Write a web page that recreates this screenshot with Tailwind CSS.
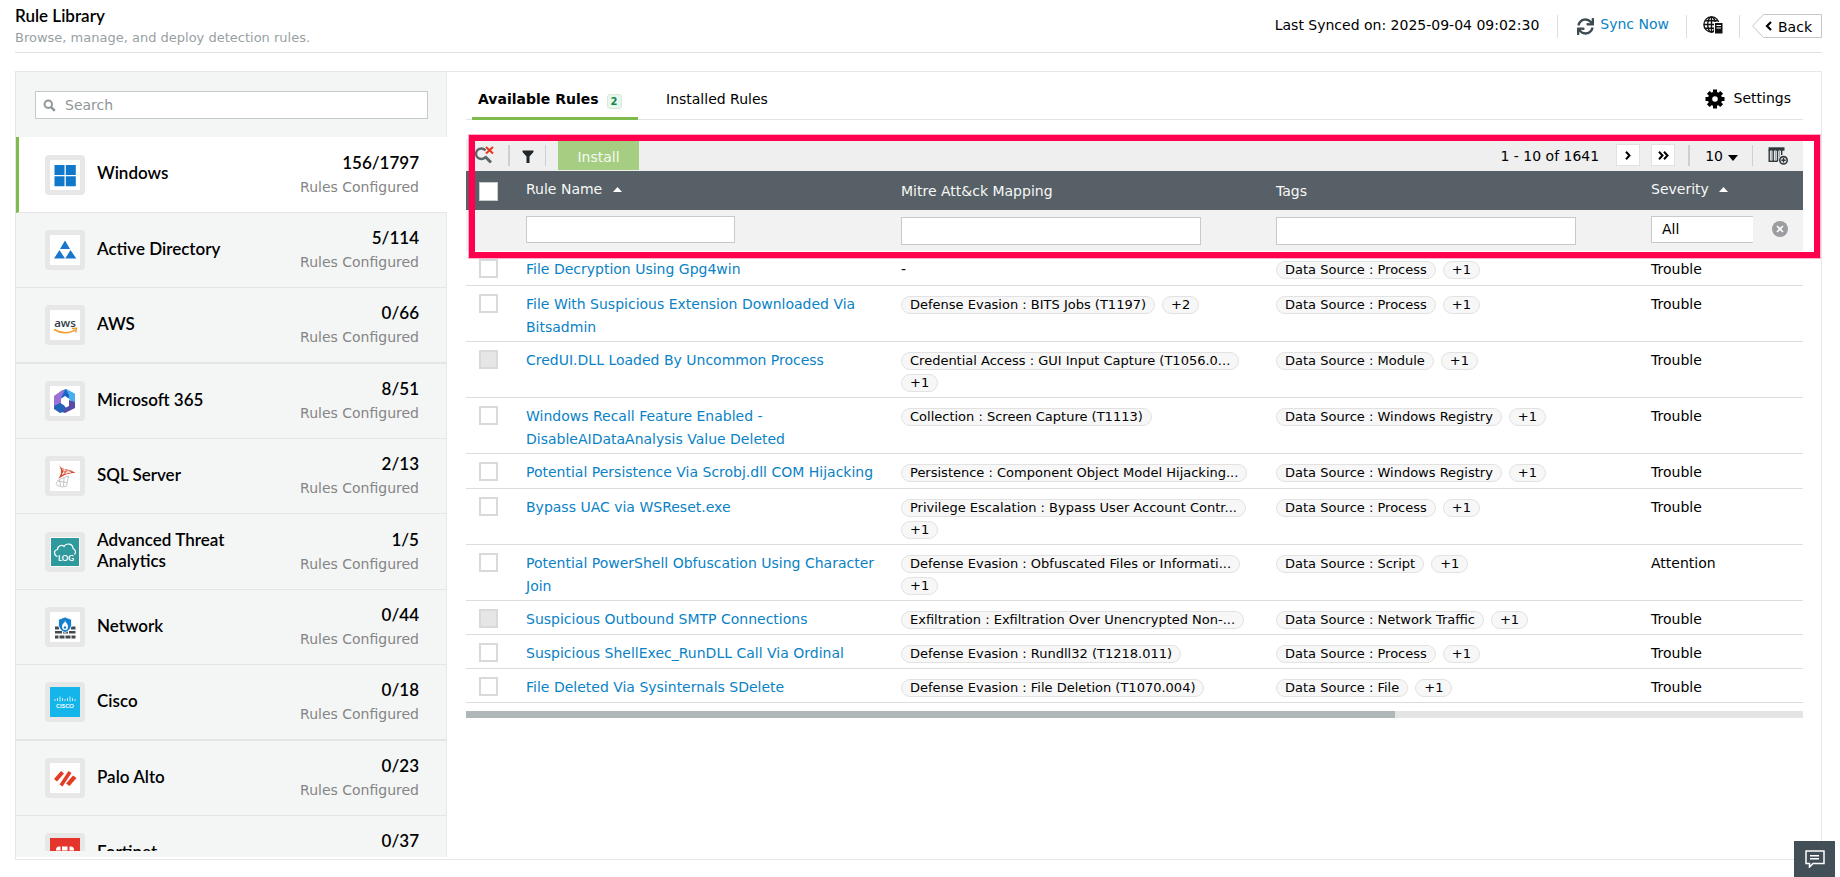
<!DOCTYPE html>
<html lang="en">
<head>
<meta charset="utf-8">
<title>Rule Library</title>
<script src="https://cdn.jsdelivr.net/npm/@tailwindcss/browser@4"></script>
</head>
<body class="min-h-screen bg-white font-['Verdana','DejaVu_Sans',sans-serif] text-[14px] text-black">
<svg class="hidden" aria-hidden="true">
  <symbol id="search" viewBox="0 0 16 16"><circle cx="6.5" cy="6.5" r="4.6" fill="none" stroke="currentColor" stroke-width="2.4"/><path d="M10 10l4.5 4.5" stroke="currentColor" stroke-width="3"/></symbol>
</svg>

<header class="mr-[18px] ml-[15px] flex h-[53px] items-start justify-between border-b border-[#e0e0e0]">
  <div class="pt-[5px]">
    <h1 class="font-['Lato',sans-serif] text-[17px] leading-[22px] font-semibold">Rule Library</h1>
    <p class="text-[13px] leading-[22px] text-[#979fa3]">Browse, manage, and deploy detection rules.</p>
  </div>
  <div class="flex items-center pt-[14px]">
    <span class="pr-[18px] pb-[3px] leading-[20px]">Last Synced on: 2025-09-04 09:02:30</span>
    <span class="h-[23px] w-px bg-[#ddd]"></span>
    <a href="#" class="flex items-center gap-[6px] pr-[17px] pb-[3px] pl-[19px] text-[#0a82c6]">
      <svg class="mt-[3px] size-[17px] text-[#3f4a50]" viewBox="0 0 512 512" fill="currentColor"><path d="M440.650 12.570l4 82.770A247.160 247.160 0 0 0 255.830 8C134.730 8 33.910 94.920 12.290 209.820A12 12 0 0 0 24.090 224h49.050a12 12 0 0 0 11.670-9.260 175.910 175.910 0 0 1 317-56.940l-101.460-4.860a12 12 0 0 0-12.570 12v47.410a12 12 0 0 0 12 12H500a12 12 0 0 0 12-12V12a12 12 0 0 0-12-12h-47.370a12 12 0 0 0-11.980 12.570zM255.830 432a175.610 175.610 0 0 1-146-77.800l101.800 4.870a12 12 0 0 0 12.570-12v-47.400a12 12 0 0 0-12-12H12a12 12 0 0 0-12 12V500a12 12 0 0 0 12 12h47.350a12 12 0 0 0 12-12.600l-4.150-82.570A247.170 247.170 0 0 0 255.830 504c121.110 0 221.930-86.920 243.550-201.820a12 12 0 0 0-11.800-14.180h-49.050a12 12 0 0 0-11.670 9.260A175.860 175.860 0 0 1 255.830 432z"/></svg>
      Sync Now</a>
    <span class="h-[23px] w-px bg-[#ddd]"></span>
    <button type="button" aria-label="Language" class="px-[16px] pb-[2px]">
      <svg class="block h-[18px] w-[20px]" viewBox="0 0 20 18"><g fill="none" stroke="#111" stroke-width="1.400"><circle cx="8.500" cy="8.500" r="7.600"/><ellipse cx="8.500" cy="8.500" rx="3.800" ry="7.600"/><path d="M8.500 1v15M1 8.500h15M2.300 4.700h12.400M2.300 12.300h12.400"/></g><path d="M11 6h9v12h-9z" fill="#fff"/><path d="M12 7h7.500v10.500H12z" fill="#111"/><path d="M13.500 9.500h4.500M13.500 12h4.500" stroke="#fff"/></svg>
    </button>
    <span class="h-[23px] w-px bg-[#ddd]"></span>
    <button type="button" class="relative ml-[12px] flex h-[24px] w-[70px] items-center justify-end pr-[10px]">
      <svg class="absolute inset-0 h-[24px] w-[70px]" viewBox="0 0 70 24" fill="none" stroke="#c6c6c6"><path d="M11.500 .5h58v23h-58L.7 12z"/></svg>
      <svg class="mr-[6px] h-[10px] w-[7px]" viewBox="0 0 7 10" fill="none" stroke="#000" stroke-width="2.200"><path d="M6 1L2 5l4 4"/></svg>
      <span class="pt-[2px]">Back</span></button>
  </div>
</header>

<main class="mt-[18px] mr-[18px] ml-[15px] flex h-[789px] border border-[#e5e8e8]">
  <aside class="flex h-[785px] w-[431px] shrink-0 flex-col border-r border-[#e5e8e8] bg-[#f4f6f6]">
    <label class="mx-[19px] mt-[19px] mb-[18px] flex h-[28px] w-[393px] shrink-0 items-center border border-[#c4c9ca] bg-white pl-[7px] text-[#8f9699]">
      <svg class="size-[13px] shrink-0"><use href="#search"/></svg>
      <input type="search" aria-label="Search" placeholder="Search" class="ml-[9px] w-full outline-none placeholder:text-[#8f9699]">
    </label>
    <ul id="sources" class="h-[714px] w-[431px] overflow-hidden"></ul>
  </aside>

  <section class="min-w-0 flex-1 pr-[18px] pl-[19px]">
    <div class="flex h-[48px] items-start justify-between border-b border-[#e4e4e4]">
      <div class="flex">
        <button type="button" class="ml-[6px] flex h-[48px] w-[166px] items-center border-b-[3px] border-[#7fba4c] pt-[9px] pl-[6px] font-bold whitespace-nowrap">Available Rules
          <span class="mt-[5px] ml-[8px] h-[15px] rounded-[3px] border border-[#d8ead0] bg-[#e9f5f1] px-[3px] text-[10px] leading-[13px] text-[#0e8a3c]">2</span></button>
        <button type="button" class="ml-[28px] h-[48px] pt-[6px]">Installed Rules</button>
      </div>
      <button type="button" class="mt-[16px] mr-[12px] flex items-center gap-[9px]">
        <svg class="size-[20px]" viewBox="0 0 20 20"><circle cx="10" cy="10" r="5" fill="none" stroke="#000" stroke-width="4.400"/><g stroke="#000" stroke-width="4"><path d="M10 .5v3.500M10 16v3.500M.5 10H4M16 10h3.500M3.300 3.300l2.400 2.400M14.300 14.300l2.400 2.400M3.300 16.700l2.400-2.400M14.300 5.700l2.400-2.400"/></g></svg>
        Settings</button>
    </div>

    <div class="relative mt-[19px]">
      <div class="flex h-[32px] items-center bg-[#efefef]">
        <button type="button" aria-label="Clear search" class="ml-[9px]">
          <svg class="block h-[20px] w-[19px]" viewBox="0 0 19 20" fill="none"><path d="M10.500 5.500A5.300 5.300 0 1 0 10.500 12" stroke="#5a656a" stroke-width="2.400"/><path d="M10 11.500l6 6" stroke="#5a656a" stroke-width="3"/><path d="M11 2l7 6.500M18 2l-7 6.500" stroke="#e8341c" stroke-width="2"/></svg></button>
        <span class="ml-[14px] h-[21px] w-[2px] bg-[#cfcfcf]"></span>
        <button type="button" aria-label="Filter" class="ml-[12px] pt-[2px]"><svg class="block h-[13px] w-[12px]" viewBox="0 0 12 13" fill="#20272c"><path d="M.5.500h11v1.500L7.500 6.500V13h-3V6.500L.5 2z"/></svg></button>
        <span class="ml-[11px] h-[21px] w-px bg-[#cfcfcf]"></span>
        <button type="button" class="ml-[12px] h-[31px] w-[81px] self-start bg-[#a6ce83] pt-[5px] text-[#f4f9ef]">Install</button>
        <div class="ml-auto flex items-center">
          <span class="pt-[2px]">1 - 10 of 1641</span>
          <button type="button" aria-label="Next page" class="ml-[17px] flex h-[22px] w-[24px] items-center justify-center border border-[#e2e2e2] bg-white"><svg class="h-[9px] w-[6px]" viewBox="0 0 6 9" fill="none" stroke="#000" stroke-width="2"><path d="M1 .7l3.500 3.800L1 8.300"/></svg></button>
          <button type="button" aria-label="Last page" class="ml-[11px] flex h-[22px] w-[24px] items-center justify-center border border-[#e2e2e2] bg-white"><svg class="h-[9px] w-[11px]" viewBox="0 0 11 9" fill="none" stroke="#000" stroke-width="2"><path d="M1 .7l3.500 3.800L1 8.300M6 .7l3.500 3.800L6 8.300"/></svg></button>
          <span class="ml-[13px] h-[21px] w-[2px] bg-[#cfcfcf]"></span>
          <button type="button" class="ml-[15px] flex items-center gap-[5px] pt-[2px]">10 <svg class="mt-[3px] h-[6px] w-[10px]" viewBox="0 0 10 6"><path d="M0 0h10L5 6z"/></svg></button>
          <span class="ml-[14px] h-[21px] w-px bg-[#cfcfcf]"></span>
          <button type="button" aria-label="Choose columns" class="mr-[15px] ml-[15px] pt-[2px]"><svg class="block h-[18px] w-[20px]" viewBox="0 0 20 18" fill="none" stroke="#30383c"><path d="M.5 2h16" stroke-width="3.400"/><path d="M1.200 3v11.300h8.500M5.200 3v11M9.500 3v11M13.700 3v5" stroke-width="1.400"/><path d="M3.200 3v11M7.400 3v11M11.600 3v7" stroke="#9aa0a3" stroke-width="1"/><circle cx="15.500" cy="13.300" r="3.700" stroke-width="1.600" fill="#efefef"/><path d="M13.300 13.300h4.400M15.500 11.100v4.400" stroke-width="1.500"/></svg></button>
        </div>
      </div>

      <table class="w-full table-fixed border-collapse text-left">
        <colgroup><col class="w-[60px]"><col class="w-[375px]"><col class="w-[375px]"><col class="w-[375px]"><col></colgroup>
        <thead>
          <tr class="h-[39px] bg-[#576066] text-[#f7f8f8]">
            <th class="p-0 pt-[2px] pl-[13px]"><input type="checkbox" aria-label="Select all rules" class="block size-[19px] appearance-none border border-[#c8cccd] bg-white"></th>
            <th class="p-0 pb-[3px] font-normal">Rule Name <svg class="ml-[6px] inline h-[5px] w-[9px]" viewBox="0 0 9 5" fill="#fff"><path d="M4.500 0L9 5H0z"/></svg></th>
            <th class="p-0 pt-px font-normal">Mitre Att&amp;ck Mapping</th>
            <th class="p-0 pt-px font-normal">Tags</th>
            <th class="p-0 pb-[3px] font-normal">Severity <svg class="ml-[6px] inline h-[5px] w-[9px]" viewBox="0 0 9 5" fill="#fff"><path d="M4.500 0L9 5H0z"/></svg></th>
          </tr>
          <tr class="h-[41px] bg-[#f2f2f2]">
            <td class="p-0"></td>
            <td class="p-0 pb-[3px]"><input type="text" aria-label="Filter by rule name" class="block h-[27px] w-[209px] border border-[#c9c9c9] bg-white px-[6px]"></td>
            <td class="p-0"><input type="text" aria-label="Filter by mapping" class="block h-[28px] w-[300px] border border-[#c9c9c9] bg-white px-[6px]"></td>
            <td class="p-0"><input type="text" aria-label="Filter by tag" class="block h-[28px] w-[300px] border border-[#c9c9c9] bg-white px-[6px]"></td>
            <td class="p-0 pb-[3px]"><div class="flex items-center"><select aria-label="Filter by severity" class="h-[27px] w-[102px] appearance-none border border-r-0 border-[#c9c9c9] bg-white pl-[10px]"><option>All</option></select>
              <button type="button" aria-label="Clear filters" class="ml-[19px]"><svg class="block size-[16px]" viewBox="0 0 16 16"><circle cx="8" cy="8" r="8" fill="#9b9da0"/><path d="M5 5l6 6M11 5l-6 6" stroke="#fff" stroke-width="1.600"/></svg></button></div></td>
          </tr>
        </thead>
        <tbody id="rules"></tbody>
      </table>
      <div class="mt-[8px] h-[7px] bg-[#e4e4e4]"><div class="h-full w-[929px] bg-[#b0b7b9]"></div></div>

      <div class="pointer-events-none absolute top-[-4px] right-[-17px] left-[3px] h-[123px] border-[6px] border-[#ff004f] outline outline-[#ff004f]/30"></div>
    </div>
  </section>
</main>

<button type="button" aria-label="Feedback" class="fixed right-[5px] bottom-0 flex h-[36px] w-[41px] items-center justify-center bg-[#434f56]">
  <svg class="h-[18px] w-[20px]" viewBox="0 0 20 18" fill="none" stroke="#fff" stroke-width="1.500"><path d="M1 1h18v12.500H8L4.500 17v-3.500H1zM5 5.700h9M5 8.700h9"/></svg>
</button>

<script>
const icons = {
  windows: '<path fill="#0f78cb" d="M4.500 5h10v10h-10zM15.800 5h10v10h-10zM4.500 16.300h10v10h-10zM15.800 16.300h10v10h-10z"/>',
  ad: '<path fill="#1976cc" d="M15 5.500l5 8.500H10zM9.500 15l5.500 8.500H4zM20.500 15l5.800 8.500H15.200z"/>',
  aws: '<text x="15" y="17" text-anchor="middle" font-family="Open Sans" font-weight="600" font-size="11.500" fill="#2d3a48">aws</text><path d="M4 19.500c7 4 15 4 21 .6M22 18.500l4.500-.2-.8 4" fill="none" stroke="#f29a2e" stroke-width="1.500"/>',
  m365: '<path fill="#1d64c8" d="M11 5l5-2 9 5-6 5-4-3-4 3v8L5 23z"/><path fill="#9a72d6" d="M11 5l4-1-4 8v7l-7 3V10z"/><path fill="#49b0f0" d="M16 3l9 5v10l-6-5V9z"/><path fill="#5a4aa8" d="M25 16v6l-10 5-6-2 10-5v-6z"/><path fill="#2563b8" d="M4 20l8-4 4 6-3 4-3 1-6-4z"/><path fill="#fff" d="M15 10.500l4 2.300v4.600l-4 2.300-4-2.300v-4.600z"/>',
  sql: '<path fill="#d6482c" d="M9 4c2 3 4 4 8 4.500 3 .5 6 1.500 8.500 3.500-6 0-11 1.500-17.500 6 3-4 4.500-8 1-14z"/><path stroke="#fff" stroke-width=".8" fill="none" d="M12 8.500l9 3M12 12.500l9-1.500M15 8l-2.500 6M18.500 9l-2 4"/><path fill="none" stroke="#c3c6c8" stroke-width="1" d="M18.500 15c-1 4-1 7-2 10-4 2-9 0-10.500-2 1-4 6-6 12.500-8zM7 20l10 1.500M9.500 18l1 7M14 17l-.5 8"/>',
  log: '<path fill="#2f9a9d" d="M1 1h28v28H1z"/><path fill="none" stroke="#fff" stroke-width="1.200" d="M7.500 19.500c-4-1-4-6.500 0-7 0-4 5-5 6.500-3 2-4 9-3 9 2 3 1 3 4.500 1.500 6"/><text x="16" y="23.500" text-anchor="middle" font-family="Lato" font-weight="700" font-size="8" fill="#fff">LOG</text>',
  network: '<path fill="#434b50" d="M5 14.500h4v3H5zM21 14.500h4.500v3H21zM5 19h7v2.500H5zM13 19h5v2.500h-5zM19 19h6.500v2.500H19zM5 23.500h3.500v3H5zM9.500 23.500h5v3h-5zM15.500 23.500h5v3h-5zM21.500 23.500h4v3h-4z"/><path fill="#147fcd" stroke="#fff" stroke-width=".8" d="M15 5l6.500 2.500v5c0 4-3.500 7-6.500 8-3-1-6.500-4-6.500-8v-5z"/><path fill="#fff" d="M15 8c0 2.500 3 3.500 3 6.500s-1.500 3.500-3 3.500-3-1-3-3.500c0-2 1-2 1.500-3.500.8 0 1.500-1 1.500-3z"/><circle cx="15" cy="15.500" r="1.200" fill="#147fcd"/>',
  cisco: '<path fill="#13b5ea" d="M0 0h30v30H0z"/><path stroke="#fff" stroke-width="1" opacity=".8" d="M5 12v2M7.500 11v3M10 9.500v5M12.500 11v3M15 12v2M17.500 11v3M20 9.500v5M22.500 11v3M25 12v2"/><text x="15" y="20.500" text-anchor="middle" font-family="Lato" font-weight="700" font-size="6" fill="#fff">CISCO</text>',
  palo: '<g fill="#e23d24"><path d="M4 16l7-8 3 2.500-7 8zM16 20.500l7-8 3.500 2.500-7 8zM9.500 21.500L18.500 8l3 2-9 13.500z"/></g>',
  fortinet: '<path fill="#e5342b" d="M0 0h30v30H0z"/><path fill="#fff" d="M6 12c0-2 1-3.500 3-3.500h1.500v4H6zM12 8.500h5.500v4H12zM19.500 8.500H21c2 0 3 1.500 3 3.500v.5h-4.500zM6 14h5v4H6zM19.500 14h5v4h-5z"/>'
};
const sources = [
  ['windows','Windows','156/1797','h-[76px]'],['ad','Active Directory','5/114','h-[75px]'],
  ['aws','AWS','0/66','h-[76px] border-b-2'],['m365','Microsoft 365','8/51','h-[75px]'],
  ['sql','SQL Server','2/13','h-[75px]'],['log','Advanced Threat<br>Analytics','1/5','h-[76px]'],
  ['network','Network','0/44','h-[75px]'],['cisco','Cisco','0/18','h-[76px] border-b-2'],
  ['palo','Palo Alto','0/23','h-[75px]'],['fortinet','Fortinet','0/37','h-[75px]']
];
document.getElementById('sources').innerHTML = sources.map(([k, n, c, h], i) => `
  <li class="${h} flex items-center border-b border-[#e4e6e6] pr-[28px] ${i ? 'pl-[29px]' : 'border-l-[3px] border-l-[#7fba4c] bg-white pl-[26px]'}">
    <span class="size-[40px] shrink-0 rounded-[4px] border-[5px] border-[#e7e7e7] bg-white"><svg class="block size-[30px]" viewBox="0 0 30 30">${icons[k]}</svg></span>
    <a href="#" class="ml-[12px] flex-1 pb-[4px] font-['Lato',sans-serif] text-[17px] leading-[21px] font-semibold">${n}</a>
    <span class="text-right text-[#858585]"><b class="block font-['Lato',sans-serif] text-[17px] leading-[24px] font-semibold text-black">${c}</b><span class="block leading-[24px]">${k === 'fortinet' ? '&nbsp;' : 'Rules Configured'}</span></span>
  </li>`).join('');

const P = 'Data Source : Process', W = 'Data Source : Windows Registry';
const rules = [
  ['File Decryption Using Gpg4win', '', '', P, 0, 34],
  ['File With Suspicious Extension Downloaded Via Bitsadmin', 'Defense Evasion : BITS Jobs (T1197)', '+2', P, 0, 56],
  ['CredUI.DLL Loaded By Uncommon Process', 'Credential Access : GUI Input Capture (T1056.0...', '+1', 'Data Source : Module', 1, 56],
  ['Windows Recall Feature Enabled - DisableAIDataAnalysis Value Deleted', 'Collection : Screen Capture (T1113)', '', W, 0, 56],
  ['Potential Persistence Via Scrobj.dll COM Hijacking', 'Persistence : Component Object Model Hijacking...', '', W, 0, 35],
  ['Bypass UAC via WSReset.exe', 'Privilege Escalation : Bypass User Account Contr...', '+1', P, 0, 56],
  ['Potential PowerShell Obfuscation Using Character Join', 'Defense Evasion : Obfuscated Files or Informati...', '+1', 'Data Source : Script', 0, 56],
  ['Suspicious Outbound SMTP Connections', 'Exfiltration : Exfiltration Over Unencrypted Non-...', '', 'Data Source : Network Traffic', 1, 34],
  ['Suspicious ShellExec_RunDLL Call Via Ordinal', 'Defense Evasion : Rundll32 (T1218.011)', '', P, 0, 34],
  ['File Deleted Via Sysinternals SDelete', 'Defense Evasion : File Deletion (T1070.004)', '', 'Data Source : File', 0, 34]
];
const heights = { 34: 'h-[34px]', 35: 'h-[35px]', 56: 'h-[56px]' };
const pill = (t) => `<span class="h-[18px] rounded-[9px] border border-[#e2e2e2] bg-[#f7f7f7] px-[8px] text-[13px] leading-[16px] whitespace-nowrap ${t.endsWith('...') ? 'min-w-[337px]' : ''}">${t}</span>`;
const pills = (a) => `<div class="flex flex-wrap gap-x-[7px] gap-y-[4px] pt-[10px] pr-[20px]">${a.filter(Boolean).map(pill).join('')}</div>`;
document.getElementById('rules').innerHTML = rules.map(([n, m, x, t, off, h]) => `
  <tr class="${heights[h]} border-b border-[#dcdcdc] align-top">
    <td class="p-0 pt-[8px] pl-[13px]"><input type="checkbox" aria-label="${n}" ${off ? 'disabled' : ''} class="block size-[19px] appearance-none border-2 border-[#d9d9d9] bg-white disabled:bg-[#e6e6e6]"></td>
    <td class="p-0 pt-[7px] pr-[25px] leading-[23px]"><a href="#" class="text-[#0a82c6]">${n}</a></td>
    <td class="p-0">${m ? pills([m, x]) : '<div class="pt-[7px] leading-[23px]">-</div>'}</td>
    <td class="p-0">${pills([t, '+1'])}</td>
    <td class="p-0 pt-[7px] leading-[23px]">${n.includes('PowerShell') ? 'Attention' : 'Trouble'}</td>
  </tr>`).join('');
</script>
</body>
</html>
